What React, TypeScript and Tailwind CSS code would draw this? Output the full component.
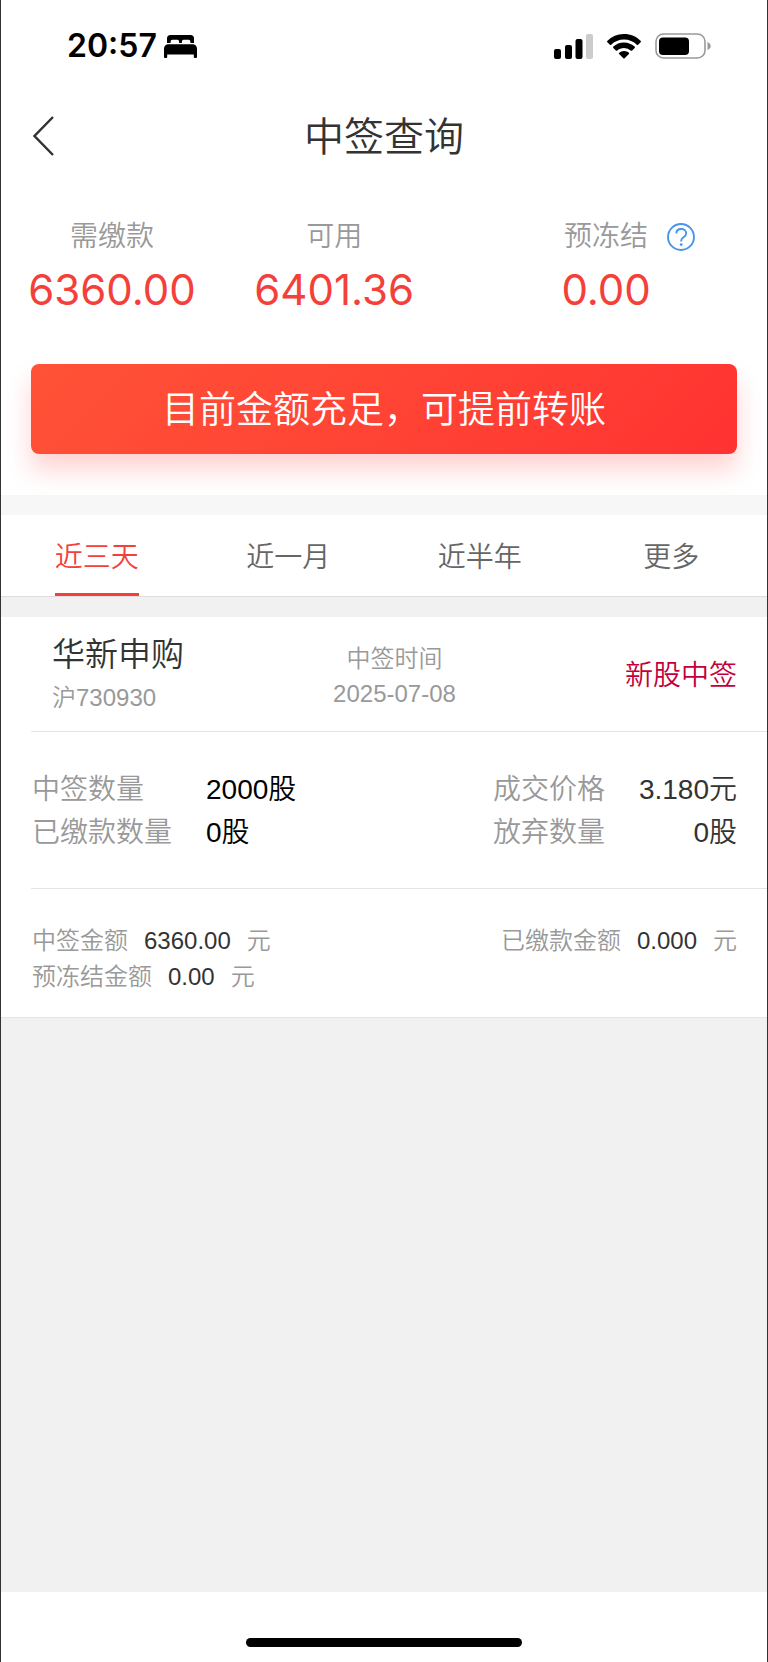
import { useState } from "react";

const TABS = ["近三天", "近一月", "近半年", "更多"];

function BedIcon() {
  return (
    <svg width="33" height="23" viewBox="0 0 33 23" aria-hidden="true">
      <path d="M3 8V3.500A3.500 3.500 0 0 1 6.500 0h20A3.500 3.500 0 0 1 30 3.500V8h-3.600V6.400A1.600 1.600 0 0 0 24.800 4.800h-5.300a1.600 1.600 0 0 0-1.600 1.600V8h-2.800V6.400a1.600 1.600 0 0 0-1.600-1.600H8.200a1.600 1.600 0 0 0-1.600 1.600V8z" />
      <path d="M0 13.500A4.300 4.300 0 0 1 4.300 9.200h24.400a4.300 4.300 0 0 1 4.300 4.300V22a1 1 0 0 1-1 1h-1.200a1 1 0 0 1-1-1v-2.500H3.200V22a1 1 0 0 1-1 1H1a1 1 0 0 1-1-1z" />
    </svg>
  );
}

function SignalIcon() {
  return (
    <svg width="39" height="25" viewBox="0 0 39 25" aria-hidden="true">
      <rect x="0" y="15" width="7" height="10" rx="2" />
      <rect x="11" y="11" width="7" height="14" rx="2" />
      <rect x="21.500" y="5" width="7" height="20" rx="2" />
      <rect x="32" y="0" width="7" height="25" rx="2" fill="#ccc" />
    </svg>
  );
}

function WifiIcon() {
  return (
    <svg width="34" height="25" viewBox="0 0 34 25" aria-hidden="true">
      <path d="M17 0C23.600 0 29.600 2.600 33.800 7l.1.900-3 3-.8 0A18.500 18.500 0 0 0 17 5.400 18.500 18.500 0 0 0 3.900 10.900l-.8 0-3-3 .1-.9A23.400 23.400 0 0 1 17 0z" />
      <path d="M17 8.500c4.200 0 8 1.600 10.900 4.300l0 .9-3 3-.9 0A10.200 10.200 0 0 0 17 13.900c-2.700 0-5.100 1-7 2.800l-.9 0-3-3 0-.9A15.800 15.800 0 0 1 17 8.500z" />
      <path d="M17 17c2 0 3.700.7 5.100 1.900l0 .9-4.700 4.800-.8 0-4.700-4.800 0-.9A7.700 7.700 0 0 1 17 17z" />
    </svg>
  );
}

function BatteryIcon() {
  return (
    <svg width="56" height="26" viewBox="0 0 56 26" aria-hidden="true">
      <rect x="1" y="1" width="49" height="24" rx="7.500" fill="none" stroke="#999" strokeWidth="1.600" />
      <rect x="4" y="4.500" width="30" height="17.500" rx="4" />
      <path d="M52.500 9c2 .8 3.200 2.300 3.200 4s-1.200 3.200-3.200 4z" fill="#999" />
    </svg>
  );
}

function HelpIcon() {
  return (
    <svg width="28" height="28" viewBox="0 0 28 28" fill="none" stroke="#4a94ea" aria-hidden="true">
      <circle cx="14" cy="14" r="13" strokeWidth="1.900" />
      <path d="M9.300 10.600C9.300 7.800 11.300 6 14.200 6c2.900 0 5 1.700 5 4.200 0 1.900-1 3-2.700 4.100-1.700 1.100-2.300 1.900-2.300 3.400v.8" strokeWidth="1.900" />
      <circle cx="14.200" cy="21.600" r="1.400" fill="#4a94ea" stroke="none" />
    </svg>
  );
}

export default function App() {
  const [tab, setTab] = useState(0);

  return (
    <div className="flex min-h-screen flex-col border-x border-[#333] bg-[#f1f1f1] font-['Liberation_Sans','Noto_Sans_CJK_SC',sans-serif] font-[350] text-[#333]">
      <div className="bg-white">
        <div className="flex h-[92px] items-center justify-between pr-14 pl-[66px] text-black">
          <div className="flex items-center gap-[7px]">
            <span className="font-['Inter',sans-serif] text-[32px] leading-[32px] font-semibold">20:57</span>
            <BedIcon />
          </div>
          <div className="flex items-center gap-[14px]">
            <SignalIcon />
            <WifiIcon />
            <BatteryIcon />
          </div>
        </div>

        <header className="grid h-[88px] grid-cols-[1fr_auto_1fr] items-center px-[30px]">
          <button aria-label="返回" className="justify-self-start">
            <svg width="24" height="40" viewBox="0 0 24 40" fill="none" stroke="#333" strokeWidth="2.500">
              <path d="M22 1 3.500 20 22 39" />
            </svg>
          </button>
          <h1 className="pt-0.5 text-[40px] leading-[48px] font-[350]">中签查询</h1>
        </header>

        <section className="grid grid-cols-[29%_29%_42%] pt-[38px] text-center">
          <div>
            <p className="text-[28px] leading-[38px] text-[#999]">需缴款</p>
            <p className="font-['Inter',sans-serif] text-[42px] leading-[68px] font-normal text-[#f43f3b]">6360.00</p>
          </div>
          <div>
            <p className="text-[28px] leading-[38px] text-[#999]">可用</p>
            <p className="font-['Inter',sans-serif] text-[42px] leading-[68px] font-normal text-[#f43f3b]">6401.36</p>
          </div>
          <div>
            <div className="grid grid-cols-[1fr_auto_1fr] items-center">
              <p className="col-start-2 text-[28px] leading-[38px] text-[#999]">预冻结</p>
              <button aria-label="预冻结说明" className="ml-[19px] justify-self-start">
                <HelpIcon />
              </button>
            </div>
            <p className="font-['Inter',sans-serif] text-[42px] leading-[68px] font-normal text-[#f43f3b]">0.00</p>
          </div>
        </section>

        <div className="px-[30px] pt-10 pb-[41px]">
          <button className="h-[90px] w-full rounded-lg bg-linear-135 from-[#ff5237] to-[#ff3232] pt-1 text-[37px] text-white shadow-[0_16px_24px_rgba(255,50,50,0.22)]">
            目前金额充足，可提前转账
          </button>
        </div>
      </div>

      <nav className="mt-5 flex h-[82px] border-b border-[#ddd] bg-white shadow-[0_-20px_0_#f7f7f7]">
        {TABS.map((name, i) => (
          <button
            key={name}
            onClick={() => setTab(i)}
            className={`flex flex-1 justify-center text-[28px] ${tab === i ? "text-[#f43f3b]" : "text-[#666]"}`}
          >
            <span className={`flex h-full items-center border-b-3 pt-2 ${tab === i ? "border-[#f43f3b]" : "border-transparent"}`}>
              {name}
            </span>
          </button>
        ))}
      </nav>

      <article className="mt-5 border-b border-[#e4e4e4] bg-white pl-[30px]">
        <div className="grid h-[115px] grid-cols-[1fr_auto_1fr] items-center border-b border-[#e4e4e4] pt-1 pr-[30px] pl-[21px]">
          <div>
            <h2 className="text-[33px] leading-[44px] font-[350]">华新申购</h2>
            <p className="text-[24px] leading-[42px] text-[#999]">沪730930</p>
          </div>
          <div className="text-center text-[24px] leading-[35px] text-[#999]">
            <p>中签时间</p>
            <p>2025-07-08</p>
          </div>
          <p className="justify-self-end text-[28px] text-[#c4003b]">新股中签</p>
        </div>

        <div className="flex justify-between border-b border-[#e4e4e4] pt-9 pr-[30px] pb-[34px] pl-px text-[28px] leading-[43px]">
          <dl className="grid grid-cols-[auto_auto] gap-x-[34px]">
            <dt className="text-[#999]">中签数量</dt>
            <dd className="text-black">2000股</dd>
            <dt className="text-[#999]">已缴款数量</dt>
            <dd className="text-black">0股</dd>
          </dl>
          <dl className="grid grid-cols-[auto_auto] gap-x-[34px]">
            <dt className="text-[#999]">成交价格</dt>
            <dd className="text-right">3.180元</dd>
            <dt className="text-[#999]">放弃数量</dt>
            <dd className="text-right">0股</dd>
          </dl>
        </div>

        <div className="flex justify-between pt-[34px] pr-[30px] pb-[22px] pl-px text-[24px] leading-[36px] text-[#999]">
          <div>
            <p className="flex gap-4">
              中签金额<span className="text-[#333]">6360.00</span>元
            </p>
            <p className="flex gap-4">
              预冻结金额<span className="text-[#333]">0.00</span>元
            </p>
          </div>
          <p className="flex gap-4">
            已缴款金额<span className="text-[#333]">0.000</span>元
          </p>
        </div>
      </article>

      <div className="mt-auto flex h-[70px] items-end justify-center bg-white pb-[15px]">
        <div className="h-[9px] w-[36%] rounded-full bg-black" />
      </div>
    </div>
  );
}
